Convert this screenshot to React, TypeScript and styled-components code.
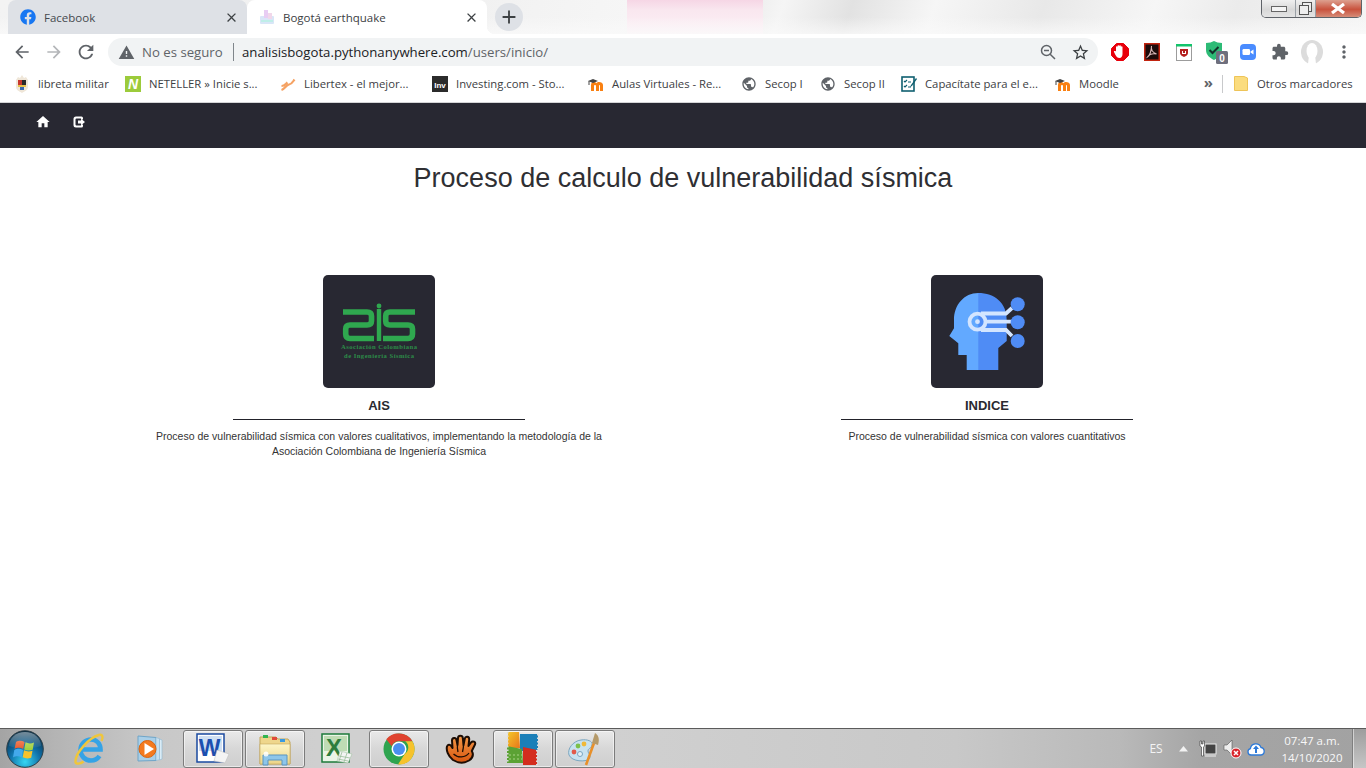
import React from "react";
import styled, { createGlobalStyle } from "styled-components";
import { FaFacebook } from "react-icons/fa";
import { MdHome, MdArrowBack, MdArrowForward, MdRefresh, MdStarBorder, MdClose, MdAdd, MdExtension, MdMoreVert, MdWarning, MdPublic } from "react-icons/md";

const Global = createGlobalStyle`
  html, body { margin: 0; padding: 0; background: #fff; }
  * { box-sizing: border-box; }
  #root { width: 1366px; height: 768px; overflow: hidden; }
`;
const Page = styled.div`
  width: 1366px; height: 768px; display: flex; flex-direction: column; overflow: hidden;
  font-family: "Liberation Sans", Arial, sans-serif; background: #fff;
`;
const TabStrip = styled.div`
  height: 34px; flex: none; display: flex; align-items: flex-start; padding-left: 8px;
  background:
    linear-gradient(180deg, rgba(250,250,250,0) 50%, rgba(250,250,250,.75) 100%),
    linear-gradient(180deg, #f6d6e5 0%, #f9e7ef 30%, #fcf1f6 100%) no-repeat 627px 0 / 136px 34px,
    linear-gradient(108deg, #f3f3f3 0%, #efefef 30%, #f6f6f6 46%, #e4e4e4 52%, #f5f5f5 57%, #e2e2e2 62%, #f6f6f6 68%, #e8e8e8 76%, #f6f6f6 84%, #ebebeb 90%, #f5f5f5 100%);
`;
const Tab = styled.div<{ $active?: boolean }>`
  position: relative; width: ${p => (p.$active ? 240 : 239)}px; height: 34px; display: flex; align-items: center;
  padding: 0 8px 0 12px; border-radius: 8px 8px 0 0; background: ${p => (p.$active ? "#fff" : "#dee1e6")};
  font: 11.5px "Open Sans", sans-serif; color: ${p => (p.$active ? "#3c4043" : "#45494e")};
  ${p => p.$active ? `
  &::after { content: ""; position: absolute; right: -8px; bottom: 0; width: 8px; height: 8px;
    background: radial-gradient(circle at 100% 0, transparent 8px, #fff 8.5px); }` : ""}
`;
const TabTitle = styled.span`margin-left: 8px; flex: 1; white-space: nowrap;`;
const NewTab = styled.div`
  width: 28px; height: 28px; margin: 3px 0 0 8px; border-radius: 50%; background: #dee1e6;
  display: flex; align-items: center; justify-content: center; color: #3c4043;
`;
const WinControls = styled.div`
  margin-left: auto; margin-right: 4px; width: 101px; height: 18px; display: flex;
  border: 1px solid #5e6268; border-top: none; border-radius: 0 0 5px 5px; overflow: hidden;
`;
const WinBtn = styled.div<{ $w: number; $close?: boolean }>`
  width: ${p => p.$w}px; display: flex; align-items: center; justify-content: center;
  border-right: 1px solid ${p => (p.$close ? "transparent" : "#9aa0a6")};
  background: ${p => (p.$close ? "linear-gradient(180deg,#dda08f 0%,#c9523d 55%,#d68c78 100%)" : "linear-gradient(180deg,#f0f0f0,#d8d8d8 55%,#e4e4e4)")};
`;
const Toolbar = styled.div`
  height: 34px; flex: none; background: #fff; display: flex; align-items: center; padding: 2px 6px 0;
`;
const NavBtn = styled.div<{ $c?: string }>`
  width: 32px; height: 28px; flex: none; display: flex; align-items: center; justify-content: center; color: ${p => p.$c || "#5f6368"};
`;
const Pill = styled.div`
  flex: 1; height: 28px; margin: 0 6px; border-radius: 14px; background: #f1f3f4; display: flex; align-items: center;
  padding: 0 2px 0 10px; font: 13.2px "Open Sans", sans-serif; color: #5f6368; white-space: nowrap;
`;
const Insecure = styled.span`margin-left: 7px; width: 82px;`;
const Sep = styled.i`width: 1px; height: 18px; background: #80868b; margin: 0 8px 0 9px;`;
const Url = styled.span`flex: 1; color: #5f6368; b { font-weight: 400; color: #202124; }`;
const Bookmarks = styled.div`
  height: 35px; flex: none; display: flex; align-items: center; padding: 0 0 3px 14px; background: #fff; border-bottom: 1px solid #d4d5d7;
  font: 11.3px "Open Sans", sans-serif; color: #3c4043;
`;
const Bookmark = styled.div<{ $w: number }>`
  width: ${p => p.$w}px; flex: none; display: flex; align-items: center; gap: 8px; white-space: nowrap;
`;
const Chevrons = styled.span`margin-left: auto; font-size: 15px; font-weight: 700; color: #5f6368; line-height: 1; padding-bottom: 3px;`;
const BarSep = styled.i`width: 1px; height: 18px; background: #c8c9cb; margin: 0 11px 0 9px;`;
const OtherBookmarks = styled.div`display: flex; align-items: center; gap: 9px; width: 132px; white-space: nowrap;`;
const Nav = styled.nav`
  height: 45px; flex: none; background: #282832; display: flex; align-items: center; padding: 0 0 7px 25px; color: #fff;
`;
const NavIcon = styled.div`width: 36px; display: flex; justify-content: center; align-items: center;`;
const Main = styled.main`flex: 1; min-height: 0; background: #fff; color: #2b2b2b;`;
const Title = styled.h1`
  margin: 15px 0 0; font-size: 27px; line-height: 31px; font-weight: 400; text-align: center; color: #2f2f33;
`;
const Cards = styled.section`
  display: grid; grid-template-columns: 1fr 1fr; padding: 81px 75px 0;
`;
const Card = styled.article`display: flex; flex-direction: column; align-items: center;`;
const Tile = styled.div`
  width: 112px; height: 113px; border-radius: 5px; background: #282832; display: flex;
  svg { display: block; }
`;
const CardName = styled.h3`
  margin: 10px 0 0; font-size: 13px; line-height: 15px; font-weight: 700; color: #2a2a30;
`;
const Rule = styled.hr`width: 292px; height: 1px; border: none; background: #22222a; margin: 6px 0 9px;`;
const Desc = styled.p`
  margin: 0; width: 470px; font-size: 10.5px; line-height: 15px; text-align: center; color: #333;
`;
const Taskbar = styled.footer`
  height: 40px; flex: none; display: flex; align-items: stretch; border-top: 1px solid #5b5b5b;
  background: linear-gradient(90deg,#a4a4a4 0%,#b4b4b4 4%,#c8c8c8 11%,#d0d0d0 25%,#d0d0d0 45%,#c8c8c8 70%,#b9b9b9 82%,#a5a5a5 88%,#a2a2a2 100%);
`;
const TaskItem = styled.div<{ $w?: number; $open?: boolean }>`
  width: ${p => p.$w || 60}px; flex: none; margin-right: 2px; display: flex; align-items: center; justify-content: center;
  ${p => p.$open ? `border: 1px solid #7c7c7c; border-radius: 3px; margin-top: 1px; box-shadow: inset 0 0 0 1px rgba(255,255,255,.55);
    background: linear-gradient(180deg,#e9e9e9,#d7d7d7 50%,#cfcfcf);` : ""}
`;
const StartSlot = styled.div`
  width: 57px; flex: none; margin-right: 2px; padding-left: 6px; display: flex; align-items: center;
`;
const Tray = styled.div`margin-left: auto; display: flex; align-items: stretch; color: #fff;`;
const TrayCell = styled.div<{ $w: number }>`
  width: ${p => p.$w}px; display: flex; align-items: center; justify-content: center; font: 12px "Open Sans", sans-serif; color: #f4f4f4;
`;
const Clock = styled.div`
  width: 84px; padding-left: 4px; text-align: center; font: 11.5px/17px "Open Sans", sans-serif; color: #f8f8f8; align-self: center;
`;
const ShowDesktop = styled.div`
  width: 14px; border-left: 1px solid #7f7f7f; background: linear-gradient(180deg,#9d9d9d,#c6c6c6);
  box-shadow: inset 1px 0 0 rgba(255,255,255,.5);
`;

const Exit = () => (
  <svg width="14" height="14" viewBox="0 0 14 14"><path fill="#fff" d="M4 1.500h5.500A1.500 1.500 0 0 1 11 3v1.600H9V3.600H4.500a1 1 0 0 0-1 1v4.800a1 1 0 0 0 1 1H9v-1h2V11a1.500 1.500 0 0 1-1.500 1.500H4A2.500 2.500 0 0 1 1.500 10V4A2.500 2.500 0 0 1 4 1.500z" /><path fill="#fff" d="M6 5.600h3V3.800L13 7l-4 3.200V8.400H6z" /></svg>
);
const AisLogo = () => (
  <svg width="112" height="113" viewBox="0 0 112 113">
    <g fill="none" stroke="#2fa84f" strokeWidth="5.600">
      <path d="M20 37H44Q48.500 37 48.500 41V46Q48.500 50 44 50H27Q22.700 50 22.700 54V59Q22.700 63.500 27 63.500H51" />
      <path d="M56 34V66" strokeWidth="4.400" />
      <path d="M92 37H67Q62.700 37 62.700 41V46Q62.700 50 67 50H85Q89.500 50 89.500 54V59Q89.500 63.500 85 63.500H60" />
    </g>
    <circle cx="56" cy="31" r="2.400" fill="#2fa84f" />
    <g fontFamily="'Liberation Serif', serif" fontWeight="700" fontSize="6.600" fill="#2c8c48" textAnchor="middle">
      <text x="56" y="74" textLength="76">Asociación Colombiana</text>
      <text x="56" y="83" textLength="70">de Ingeniería Sísmica</text>
    </g>
  </svg>
);
const HeadLogo = () => (
  <svg width="112" height="113" viewBox="0 0 112 113">
    <path fill="#4f8cf5" d="M47 18C64 18 75.700 28 75.700 45V66L67.300 73V95H47z" />
    <path fill="#62a9ff" d="M47.300 18C33 18 23 30 23 45V53.300L18.300 61L27.300 68.300V80H35.700V95H47.300z" />
    <g fill="none" stroke="#d3e5ff" strokeWidth="3.800">
      <circle cx="46.500" cy="46.700" r="8" />
      <path d="M50 38.500H75L81 33M55 46.700H82M50 55H75L81 61" />
    </g>
    <circle cx="46.500" cy="46.700" r="2.400" fill="#d3e5ff" />
    <g fill="#4f8cf5"><circle cx="86.700" cy="29.300" r="7" /><circle cx="86.700" cy="47.300" r="7" /><circle cx="86.700" cy="66" r="7" /></g>
  </svg>
);
const Box = ({ c, children }: { c: string; children?: React.ReactNode }) => (
  <svg width="16" height="16" viewBox="0 0 16 16"><rect width="16" height="16" fill={c} />{children}</svg>
);
const BogotaFav = () => (
  <svg width="16" height="16" viewBox="0 0 16 16" style={{ flex: "none" }}>
    <rect x="1" y="7" width="14" height="8" rx="1" fill="#d9e6f7" /><rect x="5" y="1" width="4" height="8" fill="#e8cdf3" />
    <rect x="9" y="4" width="4" height="6" fill="#f1d7ea" /><rect x="2" y="11" width="12" height="2" fill="#bfeee8" />
  </svg>
);
const Crest = () => (
  <svg width="16" height="18" viewBox="0 0 16 18"><path fill="#efe6d8" d="M2 5l2-3 2 1 2-3 2 3 2-1 2 3v7c0 3-3 4-6 6-3-2-6-3-6-6z" /><path fill="#c8372d" d="M4 5h4v5H4z" /><path fill="#2b2b2b" d="M8 5h4v5H8z" /><path fill="#e8c24a" d="M4 10h8v2H4z" /><path fill="#3a6ab0" d="M6 12h4v3H6z" /></svg>
);
const Libertex = () => (
  <svg width="16" height="16" viewBox="0 0 16 16"><path fill="none" stroke="#f5a263" strokeWidth="2.200" d="M1.500 14C5 13 6 9 9 8.500s4-3 5.500-5M1.500 10c3 0 4-2 6-3.500" /></svg>
);
const Moodle = ({ w = 16 }: { w?: number }) => (
  <svg width={w} height="16" viewBox="0 0 16 16"><path fill="#f98012" d="M3 15V9c0-2 1-3 3-3 1 0 2 .5 2.400 1.200C9 6.500 10 6 11 6c2 0 4 1 4 3v6h-3V9.500c0-.8-1-.8-1 0V15H8V9.500c0-.8-2-.8-2 0V15z" /><path fill="#444" d="M0 5l5-2 5 2-5 2z" /><path stroke="#444" d="M1 5v4" /></svg>
);
const Edit = () => (
  <svg width="16" height="16" viewBox="0 0 16 16"><rect x="1" y="1" width="12" height="14" fill="#fff" stroke="#0f5f70" strokeWidth="1.600" /><path stroke="#0f5f70" strokeWidth="1.200" fill="none" d="M3 5l1 1 2-2M3 10l1 1 2-2M7 6h3M7 11h3" /><path fill="#0f5f70" d="M10 9l5-7 1 1-5 7-2 1z" /></svg>
);
const Folder = () => (
  <svg width="14" height="17" viewBox="0 0 14 17"><path fill="#fbdc7e" stroke="#eec458" d="M.5 1.500h9.500L13.500 3v12.500H.5z" /></svg>
);
const Ext = {
  Stop: () => <svg width="20" height="20" viewBox="0 0 20 20"><path fill="#e8000b" stroke="#e8000b" strokeLinejoin="round" d="M6.500 1.500h7l5 5v7l-5 5h-7l-5-5v-7z" /><path fill="#fff" d="M6 9V5c0-1 1.500-1 1.500 0V4c0-1 1.700-1 1.700 0v0c0-1 1.700-1 1.700 0v1c0-1 1.600-1 1.600 0v7c0 2-1 4-3 4s-3-1-4-3L4 10c-.5-1 .8-1.500 1.300-.7z" /></svg>,
  Pdf: () => <svg width="16" height="18" viewBox="0 0 16 18"><rect x=".75" y=".75" width="14.500" height="16.500" fill="#1c0b0b" stroke="#c22410" strokeWidth="1.500" /><path fill="none" stroke="#d9b8b8" strokeWidth="1.100" d="M7.500 3c-.8 3 .6 6 5 8-3.500-.6-7 0-9 3 2-1 4-6 4-11" /></svg>,
  Mc: () => <svg width="16" height="17" viewBox="0 0 16 17"><rect x=".5" y=".5" width="15" height="16" fill="#fff" stroke="#9c9c9c" /><rect width="16" height="2.500" fill="#12c46b" /><path fill="#b5201f" d="M4 5h8v4c0 2-2 3-4 4-2-1-4-2-4-4z" /><path fill="#fff" d="M6 7h1v2h2V7h1v3H6z" /></svg>,
  Shield: () => <svg width="24" height="24" viewBox="0 0 24 24"><path fill="#2dbb76" d="M2 3q5 0 8-2 3 2 8 2v7c0 5-4 8-8 10-4-2-8-5-8-10z" /><path fill="none" stroke="#12312a" strokeWidth="2" d="M5.500 10l3 3 6-6" /><rect x="12" y="11" width="12" height="13" rx="1.500" fill="#6e6f7d" /><text x="18" y="21.500" textAnchor="middle" fontSize="10" fontWeight="700" fill="#fff" fontFamily="'Liberation Sans',sans-serif">0</text></svg>,
  Zoom: () => <svg width="16" height="16" viewBox="0 0 16 16"><rect width="16" height="16" rx="4" fill="#4a8cff" /><rect x="2.500" y="5" width="7.500" height="6" rx="1.200" fill="#fff" /><path fill="#fff" d="M10.500 7.500l3-2v5l-3-2z" /></svg>,
  Avatar: () => <svg width="22" height="24" viewBox="0 0 22 24"><ellipse cx="11" cy="12" rx="11" ry="12" fill="#dcdcdc" /><ellipse cx="11" cy="11" rx="5.500" ry="8" fill="#fff" /><path fill="#fff" d="M8 15h6l1 9H7z" /></svg>,
  ZoomOut: () => <svg width="16" height="16" viewBox="0 0 16 16" fill="none" stroke="#5f6368" strokeWidth="1.500"><circle cx="6.500" cy="6.500" r="5" /><path d="M10.200 10.200L15 15M4 6.500h5" /></svg>,
};
const Orb = () => (
  <svg width="38" height="38" viewBox="0 0 38 38">
    <defs>
      <radialGradient id="orb" cx=".5" cy=".85" r=".85"><stop offset="0" stopColor="#36d6f2" /><stop offset=".5" stopColor="#0f6fa8" /><stop offset="1" stopColor="#07293f" /></radialGradient>
      <linearGradient id="gloss" x1="0" y1="0" x2="0" y2="1"><stop offset="0" stopColor="#fff" stopOpacity=".45" /><stop offset="1" stopColor="#fff" stopOpacity=".04" /></linearGradient>
    </defs>
    <circle cx="19" cy="19" r="18.300" fill="url(#orb)" stroke="#2f3f47" />
    <path fill="#ea5a2a" d="M10 12c3.500-1.800 6-1.200 8.500 0l-1.300 7c-2.500-1.200-5-1.800-8.700 0z" /><path fill="#a2d13e" d="M19.500 12.300c2.500 1.200 5 1.700 8.500.3l-1.300 7.200c-3.500 1.300-6 .8-8.500-.4z" />
    <path fill="#43a9ec" d="M8.300 20c3.700-1.800 6.200-1.200 8.700 0l-1.300 7.500c-2.500-1.200-5-1.800-8.700 0z" /><path fill="#f7c22c" d="M18 20.300c2.500 1.200 5 1.700 8.500.4l-1.300 7c-3.500 1.300-6 .8-8.500-.4z" />
    <path fill="url(#gloss)" d="M3 16C3 8 10 2 19 2s16 6 16 14c-8 3-24 3-32 0z" />
  </svg>
);
const IE = () => (
  <svg width="32" height="34" viewBox="0 0 32 34">
    <path fill="none" stroke="#35a3e6" strokeWidth="4.600" d="M9 17.500h18.500c0-6-4-10-9.500-10S7.500 12 7.500 18 12 28.500 18 28.500c4 0 6.800-2 8.500-4.500" />
    <path fill="none" stroke="#f0c63a" strokeWidth="2.400" d="M26 3C17 5 2 21 2.500 30c.5 2.500 5 2 8-.5" /><path fill="none" stroke="#f0c63a" strokeWidth="2.400" d="M26 3c3.500-1 4.500 2 2.500 6" />
  </svg>
);
const Wmp = () => (
  <svg width="30" height="30" viewBox="0 0 30 30">
    <path fill="#a9cfe8" stroke="#6fa5c8" d="M2 2l18 1.500v23L2 27z" /><path fill="#c7e0f0" stroke="#8fb9d4" strokeWidth=".6" d="M20 3.500l3.500 1.200v21L20 26.500z" /><path fill="#dbecf6" stroke="#8fb9d4" strokeWidth=".6" d="M23.500 5l2.500 1v19l-2.500 1z" />
    <circle cx="11.500" cy="15" r="8.500" fill="#f47a1f" stroke="#d86510" /><path fill="#fff" d="M8.500 9l9.500 6-9.500 6z" />
  </svg>
);
const Word = () => (
  <svg width="34" height="32" viewBox="0 0 34 32">
    <rect x="1" y="1" width="27" height="28" fill="#fff" stroke="#1a4aa0" strokeWidth="1.500" /><rect x="3" y="3" width="23" height="15" fill="#cfdff2" />
    <text x="13.500" y="23" textAnchor="middle" fontFamily="'Liberation Sans',sans-serif" fontWeight="700" fontSize="23" fill="#1c4fb0">W</text>
    <path fill="#f4f4f4" stroke="#bbb" strokeWidth=".5" d="M21 17l12 4-4 9-11-2z" />
  </svg>
);
const Explorer = () => (
  <svg width="34" height="34" viewBox="0 0 34 34">
    <defs><linearGradient id="fold" x1="0" y1="0" x2="0" y2="1"><stop offset="0" stopColor="#fdf6c8" /><stop offset="1" stopColor="#ecd487" /></linearGradient></defs>
    <path fill="#eed68c" stroke="#c2a65a" d="M2 5h16l2 2h10l2 3v22H2z" /><path fill="url(#fold)" stroke="#c2a65a" strokeWidth=".6" d="M2 12h30v20H2z" />
    <rect x="5" y="3" width="5" height="3" fill="#32b550" /><rect x="14" y="5" width="5" height="3" fill="#e04a3a" /><rect x="22" y="7" width="5" height="3" fill="#3a9ae0" />
    <path fill="#8ec6ea" stroke="#5b95c0" d="M5 33v-10h24v10h-5v-5H10v5z" /><circle cx="8" cy="22" r="2.500" fill="#fff" opacity=".85" />
  </svg>
);
const Excel = () => (
  <svg width="32" height="32" viewBox="0 0 32 32">
    <rect x="1" y="1" width="27" height="28" fill="#eaf5e6" stroke="#1c7a3a" strokeWidth="1.500" /><rect x="3" y="3" width="23" height="15" fill="#bfdcb4" />
    <text x="13" y="23" textAnchor="middle" fontFamily="'Liberation Sans',sans-serif" fontWeight="700" fontSize="24" fill="#2d7d3c">X</text>
    <path fill="#f4f4f4" stroke="#9bbf9b" strokeWidth=".5" d="M19 18l12 3-4 9-11-2z" /><path stroke="#9bbf9b" strokeWidth=".8" d="M18 23l11 2M17 26l10 2M21 19l-3 9M26 20l-3 9" />
  </svg>
);
const Chrome = () => (
  <svg width="32" height="32" viewBox="0 0 32 32">
    <circle cx="16" cy="16" r="15.500" fill="#2ea44f" />
    <path fill="#e0432f" d="M16 .5a15.500 15.500 0 0 1 13.400 7.700H16a7.800 7.800 0 0 0-7.300 5L3.300 6.200A15.500 15.500 0 0 1 16 .5z" />
    <path fill="#f6c22c" d="M29.400 8.200A15.500 15.500 0 0 1 15 31.500l6.700-10.500a7.800 7.800 0 0 0 .5-12.800z" />
    <circle cx="16" cy="16" r="7.500" fill="#fff" /><circle cx="16" cy="16" r="6" fill="#4a8ff0" />
  </svg>
);
const Mitt = () => (
  <svg width="32" height="30" viewBox="0 0 32 30">
    <defs><linearGradient id="mitt" x1="0" y1="0" x2="0" y2="1"><stop offset="0" stopColor="#f59a48" /><stop offset="1" stopColor="#d8560f" /></linearGradient></defs>
    <path fill="url(#mitt)" stroke="#1d0d04" strokeWidth="2" strokeLinejoin="round" d="M8 26C3 22 1 16 2 12.500c.6-2 3-2.200 4.200-.5L7.500 14 7 6.500C7 3.500 11 3 11.500 6L12.500 11 13 4c.2-3 4.600-3 4.800 0l.7 7 1.300-6.500c.7-2.800 4.600-2.200 4.400.8L23.500 12l2.500-3.500c1.800-2.200 5-.6 4 2l-3.200 6.500C29 21 27 24.500 24 26.500c-5 3-11 2.500-16-.5z" />
    <path fill="none" stroke="#1d0d04" strokeWidth="1.300" d="M8.500 20c4 4 12 4 15.500-1M12.500 11c-.5 3 0 5 .5 7M18.500 11c0 3-.5 5-1 7" />
  </svg>
);
const Avg = () => (
  <svg width="32" height="36" viewBox="0 0 32 36">
    <defs><linearGradient id="avgo" x1="0" y1="0" x2="1" y2="1"><stop offset="0" stopColor="#f4c62a" /><stop offset="1" stopColor="#e8761a" /></linearGradient></defs>
    <path fill="url(#avgo)" d="M1 1h11l1 16L1 17z" /><path fill="#1a7fb8" d="M13 3h18v17H13z" /><path fill="#d42d1e" d="M16 16l14 3v15H16z" /><path fill="#5ba234" d="M0 15l15 3 1 14H0z" />
    <g fill="none" stroke="#dcdcdc" strokeWidth="2" strokeDasharray="1.500 2"><path d="M.5 1V17M31 3V20M.5 15V32M30 19V35" /></g>
    <path fill="none" stroke="#8fc46a" strokeWidth="1.400" strokeDasharray="2 2" d="M2 24H15M2 28H15" />
  </svg>
);
const Paint = () => (
  <svg width="36" height="34" viewBox="0 0 36 34">
    <path fill="#c8e2f0" stroke="#7ba6c0" d="M2 23C0 17 6 9 14 8c6-1 12 1 11 5s-4 3-4 6 4 4 1 8c-3 3-17 3-20-4z" />
    <circle cx="7" cy="20" r="2.400" fill="#e25a4a" /><circle cx="11" cy="14" r="2.400" fill="#7cc04a" /><circle cx="17" cy="12" r="2.400" fill="#f0b93a" /><circle cx="13" cy="22" r="2.500" fill="#e6f1f8" stroke="#7ba6c0" />
    <path stroke="#e8902a" strokeWidth="2.600" d="M19 33L27 11" /><path fill="#b59a6a" d="M25 11l3-10c3 2 5 5 3 12z" />
  </svg>
);
const Network = () => (
  <svg width="18" height="18" viewBox="0 0 18 18"><rect x="6" y="4" width="11" height="10" fill="#444" stroke="#eee" /><path fill="#fff" stroke="#333" strokeWidth=".6" d="M1 1h1.500v3H4V1h1.500v5L4.500 7v9H2.500V7L1 6z" /><path stroke="#eee" d="M6 16h11" /></svg>
);
const Sound = () => (
  <svg width="20" height="20" viewBox="0 0 20 20"><path fill="#eee" stroke="#555" strokeWidth=".6" d="M2 6h3l5-5v15l-5-5H2z" /><circle cx="14" cy="14" r="5" fill="#d9232a" stroke="#fff" /><path stroke="#fff" strokeWidth="1.500" d="M12 12l4 4M16 12l-4 4" /></svg>
);
const Cloud = () => (
  <svg width="18" height="14" viewBox="0 0 18 14"><path fill="#fff" stroke="#2c79d8" strokeWidth="1.300" d="M4 13a3.200 3.200 0 0 1-.6-6.300A5.500 5.500 0 0 1 14 5.500 3.800 3.800 0 0 1 14 13z" /><path fill="#2c79d8" d="M9 3.500l3 3.500h-2v4H8V7H6z" /></svg>
);
const TrayUp = () => <svg width="9" height="6" viewBox="0 0 9 6"><path fill="#f2f2f2" d="M4.500 0L9 5.500H0z" /></svg>;

const marks: [number, React.ReactNode, string][] = [
  [111, <Crest />, "libreta militar"],
  [155, <Box c="#9ccb3b"><text x="8" y="13" textAnchor="middle" fontSize="14" fontWeight="700" fontStyle="italic" fill="#fff" fontFamily="'Liberation Sans',sans-serif">N</text></Box>, "NETELLER » Inicie s..."],
  [152, <Libertex />, "Libertex - el mejor..."],
  [156, <Box c="#2b2b2b"><text x="8" y="12" textAnchor="middle" fontSize="8" fontWeight="700" fill="#fff" fontFamily="'Liberation Sans',sans-serif">Inv</text></Box>, "Investing.com - Sto..."],
  [153, <Moodle />, "Aulas Virtuales - Re..."],
  [79, <MdPublic size={16} color="#5f6368" />, "Secop I"],
  [81, <MdPublic size={16} color="#5f6368" />, "Secop II"],
  [154, <Edit />, "Capacítate para el e..."],
  [70, <Moodle />, "Moodle"],
];

export default function App() {
  return (
    <Page>
      <Global />
      <TabStrip>
        <Tab><FaFacebook size={16} color="#1877f2" /><TabTitle>Facebook</TabTitle><MdClose size={15} color="#3c4043" /></Tab>
        <Tab $active><BogotaFav /><TabTitle>Bogotá earthquake</TabTitle><MdClose size={15} color="#3c4043" /></Tab>
        <NewTab><MdAdd size={22} /></NewTab>
        <WinControls>
          <WinBtn $w={35}><svg width="16" height="6"><rect x=".5" y=".5" width="15" height="5" fill="#f4f4f4" stroke="#666" /></svg></WinBtn>
          <WinBtn $w={20}><svg width="13" height="13" viewBox="0 0 13 13" fill="#eee" stroke="#555"><rect x="3.500" y=".5" width="9" height="9" /><rect x=".5" y="3.500" width="9" height="9" /></svg></WinBtn>
          <WinBtn $w={46} $close><svg width="16" height="11" viewBox="0 0 16 11"><path stroke="#fff" strokeWidth="3.200" d="M2 1l12 9M14 1L2 10" /></svg></WinBtn>
        </WinControls>
      </TabStrip>
      <Toolbar>
        <NavBtn><MdArrowBack size={20} /></NavBtn>
        <NavBtn $c="#b4b6b9"><MdArrowForward size={20} /></NavBtn>
        <NavBtn><MdRefresh size={22} /></NavBtn>
        <Pill>
          <MdWarning size={17} color="#5f6368" />
          <Insecure>No es seguro</Insecure>
          <Sep />
          <Url><b>analisisbogota.pythonanywhere.com</b>/users/inicio/</Url>
          <NavBtn><Ext.ZoomOut /></NavBtn>
          <NavBtn><MdStarBorder size={19} color="#3c4043" /></NavBtn>
        </Pill>
        <NavBtn><Ext.Stop /></NavBtn>
        <NavBtn><Ext.Pdf /></NavBtn>
        <NavBtn><Ext.Mc /></NavBtn>
        <NavBtn><Ext.Shield /></NavBtn>
        <NavBtn><Ext.Zoom /></NavBtn>
        <NavBtn><MdExtension size={18} color="#5f6368" /></NavBtn>
        <NavBtn><Ext.Avatar /></NavBtn>
        <NavBtn><MdMoreVert size={20} color="#5f6368" /></NavBtn>
      </Toolbar>
      <Bookmarks>
        {marks.map(([w, icon, label]) => <Bookmark key={label} $w={w}>{icon}{label}</Bookmark>)}
        <Chevrons>»</Chevrons>
        <BarSep />
        <OtherBookmarks><Folder />Otros marcadores</OtherBookmarks>
      </Bookmarks>
      <Nav>
        <NavIcon><MdHome size={16} /></NavIcon>
        <NavIcon><Exit /></NavIcon>
      </Nav>
      <Main>
        <Title>Proceso de calculo de vulnerabilidad sísmica</Title>
        <Cards>
          <Card>
            <Tile><AisLogo /></Tile>
            <CardName>AIS</CardName>
            <Rule />
            <Desc>Proceso de vulnerabilidad sísmica con valores cualitativos, implementando la metodología de la Asociación Colombiana de Ingeniería Sísmica</Desc>
          </Card>
          <Card>
            <Tile><HeadLogo /></Tile>
            <CardName>INDICE</CardName>
            <Rule />
            <Desc>Proceso de vulnerabilidad sísmica con valores cuantitativos</Desc>
          </Card>
        </Cards>
      </Main>
      <Taskbar>
        <StartSlot><Orb /></StartSlot>
        <TaskItem><IE /></TaskItem>
        <TaskItem><Wmp /></TaskItem>
        <TaskItem $open><Word /></TaskItem>
        <TaskItem $open><Explorer /></TaskItem>
        <TaskItem><Excel /></TaskItem>
        <TaskItem $open><Chrome /></TaskItem>
        <TaskItem><Mitt /></TaskItem>
        <TaskItem $open><Avg /></TaskItem>
        <TaskItem $open><Paint /></TaskItem>
        <Tray>
          <TrayCell $w={28}>ES</TrayCell>
          <TrayCell $w={26}><TrayUp /></TrayCell>
          <TrayCell $w={24}><Network /></TrayCell>
          <TrayCell $w={24}><Sound /></TrayCell>
          <TrayCell $w={24}><Cloud /></TrayCell>
          <Clock>07:47 a.m.<br />14/10/2020</Clock>
          <ShowDesktop />
        </Tray>
      </Taskbar>
    </Page>
  );
}
